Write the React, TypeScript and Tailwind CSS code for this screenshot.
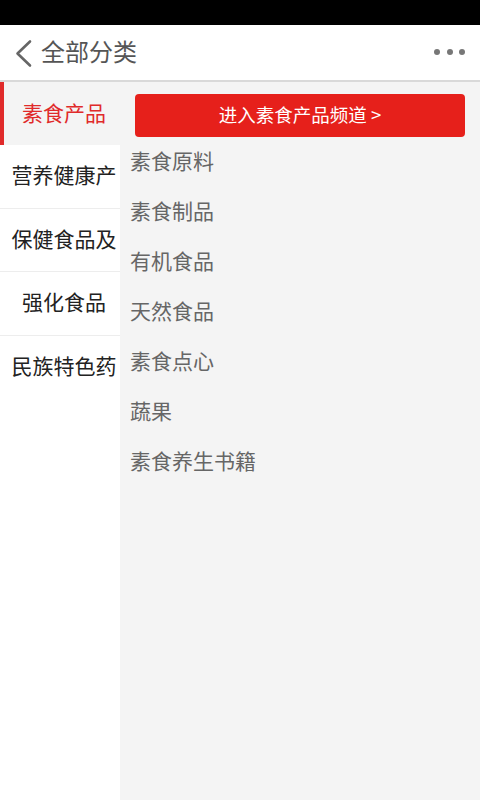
import React from "react";

const font = { fontFamily: '"Noto Sans CJK SC", "Noto Sans", sans-serif' };

const sideItems = ["营养健康产", "保健食品及", "强化食品", "民族特色药"];
const subItems = ["素食原料", "素食制品", "有机食品", "天然食品", "素食点心", "蔬果", "素食养生书籍"];

export default function App() {
  return (
    <div className="w-[480px] h-[800px] flex flex-col bg-white overflow-hidden" style={font}>
      <div className="h-[25px] bg-black shrink-0" />
      <div className="h-[55px] shrink-0 flex items-center bg-white">
        <svg width="40" height="40" viewBox="0 0 40 40" className="ml-[4px] shrink-0 -translate-y-[1px]">
          <polyline points="26,9.5 13.5,21.5 26,33.5" fill="none" stroke="#666" strokeWidth="2.6" strokeLinecap="round" strokeLinejoin="round" />
        </svg>
        <div className="ml-[-3px] pb-[4px] text-[24px] leading-none text-[#555]">全部分类</div>
        <div className="ml-auto mr-[15px] flex gap-[6.5px] -translate-y-[1px]">
          <span className="w-[6px] h-[6px] rounded-full bg-[#777]" />
          <span className="w-[6px] h-[6px] rounded-full bg-[#777]" />
          <span className="w-[6px] h-[6px] rounded-full bg-[#777]" />
        </div>
      </div>
      <div className="h-[2px] bg-[#d9d9d9] shrink-0" />
      <div className="flex flex-1 min-h-0">
        <div className="w-[120px] shrink-0 bg-white flex flex-col">
          <div className="h-[63px] bg-[#f4f4f4] flex items-center relative pb-[3px]">
            <div className="absolute left-0 top-0 bottom-0 w-[4px] bg-[#e02a2a]" />
            <div className="w-full pl-[8px] text-center text-[21px] leading-none text-[#e02a2a]">素食产品</div>
          </div>
          {sideItems.map((t, i) => (
            <div
              key={t}
              className={
                "h-[63.5px] flex items-center overflow-hidden whitespace-nowrap pb-[3px] " +
                (i < sideItems.length - 1 ? "border-b border-[#ededed]" : "")
              }
            >
              <div className="w-full pl-[8px] text-center text-[21px] leading-none text-[#222]">{t}</div>
            </div>
          ))}
        </div>
        <div className="flex-1 bg-[#f4f4f4] flex flex-col pt-[12px]">
          <div className="mx-[15px] h-[43px] pb-[2px] rounded-[4px] bg-[#e6201b] flex items-center justify-center text-white text-[18.5px] leading-none">
            进入素食产品频道 &gt;
          </div>
          <div className="flex flex-col">
            {subItems.map((t) => (
              <div key={t} className="h-[50px] pb-[4px] flex items-center pl-[10px] text-[21px] leading-none text-[#666]">
                {t}
              </div>
            ))}
          </div>
        </div>
      </div>
    </div>
  );
}
